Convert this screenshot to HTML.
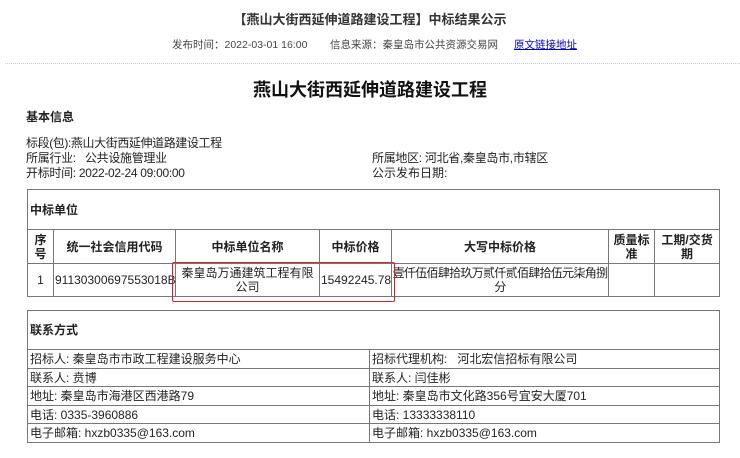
<!DOCTYPE html>
<html><head><meta charset="utf-8"><style>
*{margin:0;padding:0;box-sizing:border-box}
body{width:740px;height:458px;background:#fff;font-family:"Liberation Sans","Noto Sans CJK SC",sans-serif;color:#222;position:relative;overflow:hidden;font-size:12px}
.a{position:absolute;white-space:nowrap}
table{position:absolute;border-collapse:collapse;table-layout:fixed}
td{border:1.5px solid #777;font-size:12px;line-height:14px;padding:0 2px}
.b{font-weight:bold;text-align:center}
</style></head><body>
<div class="a" style="left:0;width:740px;text-align:center;top:9px;font-size:13px;font-weight:bold;color:#333">【燕山大街西延伸道路建设工程】中标结果公示</div>
<div class="a" style="left:172px;top:37px;font-size:10.5px;color:#444">发布时间：2022-03-01 16:00</div>
<div class="a" style="left:330px;top:37px;font-size:10.5px;color:#444">信息来源：秦皇岛市公共资源交易网</div>
<div class="a" style="left:514px;top:37px;font-size:10.5px;color:#00c;text-decoration:underline">原文链接地址</div>
<div class="a" style="left:5px;top:63px;width:735px;border-top:1px dotted #ccc"></div>
<div class="a" style="left:0;width:740px;text-align:center;top:76px;font-size:18px;font-weight:bold;color:#111">燕山大街西延伸道路建设工程</div>
<div class="a" style="left:26px;top:108px;font-weight:bold;font-size:12px">基本信息</div>
<div class="a" style="left:26px;top:134px;letter-spacing:-0.4px">标段(包):燕山大街西延伸道路建设工程</div>
<div class="a" style="left:26px;top:149px;letter-spacing:-0.3px">所属行业:&nbsp;&nbsp;&nbsp;公共设施管理业</div>
<div class="a" style="left:26px;top:164px;letter-spacing:-0.3px">开标时间:&nbsp;2022-02-24 09:00:00</div>
<div class="a" style="left:372px;top:149px;letter-spacing:-0.3px">所属地区:&nbsp;河北省,秦皇岛市,市辖区</div>
<div class="a" style="left:372px;top:164px">公示发布日期:</div>
<table style="left:27px;top:189px;width:692px">
<colgroup><col style="width:26px"><col style="width:122px"><col style="width:144px"><col style="width:72px"><col style="width:217px"><col style="width:46px"><col style="width:65px"></colgroup>
<tr style="height:40px"><td colspan="7" style="font-weight:bold">中标单位</td></tr>
<tr style="height:34px"><td class="b">序号</td><td class="b">统一社会信用代码</td><td class="b">中标单位名称</td><td class="b">中标价格</td><td class="b">大写中标价格</td><td class="b">质量标准</td><td class="b">工期/交货期</td></tr>
<tr style="height:33px"><td style="text-align:center">1</td><td style="overflow:hidden;padding:0 1px">91130300697553018B</td><td style="text-align:center">秦皇岛万通建筑工程有限公司</td><td style="text-align:center;padding:0 1px">15492245.78</td><td style="text-align:center;padding:0;letter-spacing:-0.7px;white-space:nowrap;overflow:hidden">壹仟伍佰肆拾玖万贰仟贰佰肆拾伍元柒角捌<br>分</td><td></td><td></td></tr>
</table>
<div class="a" style="left:172px;top:262px;width:223px;height:40px;border:1.5px solid #e02020;border-radius:2px"></div>
<table style="left:27px;top:310px;width:692px">
<colgroup><col style="width:342px"><col style="width:350px"></colgroup>
<tr style="height:39px"><td colspan="2" style="font-weight:bold">联系方式</td></tr>
<tr style="height:19px"><td>招标人:&nbsp;秦皇岛市市政工程建设服务中心</td><td>招标代理机构:&nbsp;&nbsp;&nbsp;河北宏信招标有限公司</td></tr>
<tr style="height:18px"><td>联系人:&nbsp;贲博</td><td>联系人:&nbsp;闫佳彬</td></tr>
<tr style="height:19px"><td>地址:&nbsp;秦皇岛市海港区西港路79</td><td>地址:&nbsp;秦皇岛市文化路356号宜安大厦701</td></tr>
<tr style="height:18px"><td>电话:&nbsp;0335-3960886</td><td>电话:&nbsp;13333338110</td></tr>
<tr style="height:19px"><td>电子邮箱:&nbsp;hxzb0335@163.com</td><td>电子邮箱:&nbsp;hxzb0335@163.com</td></tr>
</table>
</body></html>
